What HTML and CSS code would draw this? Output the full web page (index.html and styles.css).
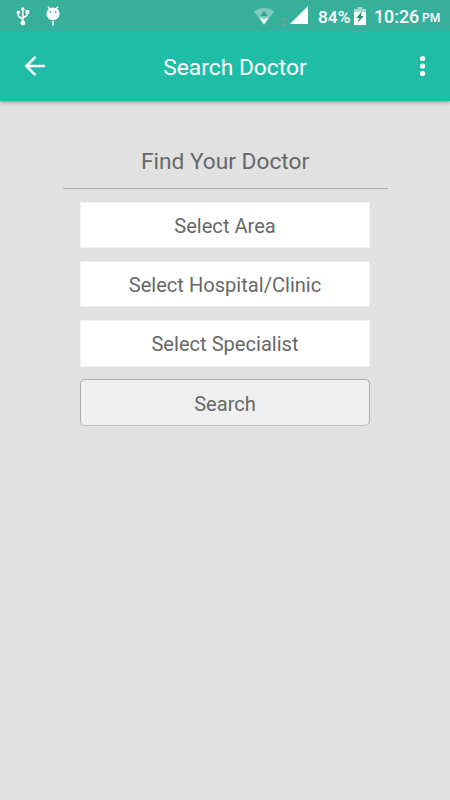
FILE: index.html
```html
<!DOCTYPE html>
<html lang="en">
<head>
<meta charset="utf-8">
<title>Search Doctor</title>
<link rel="stylesheet" href="styles.css">
</head>
<body>
<div class="status">
  <svg class="usb" width="14" height="20" viewBox="0 0 14 20" fill="none" stroke="#fff" stroke-width="1.6">
    <path d="M6.8 3v13M2.3 6v3.2Q2.3 10.5 3.8 11.2L6.8 13M11.2 5v3.2Q11.2 9.5 9.8 10.2L6.8 11.8"/>
    <path d="M6.8 .6 9 4H4.6zM9.6 4h3.6v3.4H9.6z" fill="#fff" stroke="none"/>
    <circle cx="2.3" cy="6.3" r="1.8" fill="#fff" stroke="none"/><circle cx="6.8" cy="17" r="2.4" fill="#fff" stroke="none"/>
  </svg>
  <svg class="droid" width="14" height="20" viewBox="0 0 14 20" fill="#fff">
    <path d="M2 .8 4 3M12 .8 10 3M7 15v4.5" fill="none" stroke="#fff" stroke-width="1.6"/>
    <ellipse cx="7" cy="7.8" rx="6.6" ry="6.4"/>
    <circle cx="4.3" cy="6" r=".9" fill="#36b09b"/><circle cx="9.7" cy="6" r=".9" fill="#36b09b"/>
  </svg>
  <svg class="wifi" width="22" height="18" viewBox="0 0 22 18">
    <path d="M.5 4.2Q11-2.2 21.5 4.2L11 18z" fill="#7ecbbd"/>
    <path d="M11 3.5 14.5 9h-7z" fill="#36a18f"/>
    <path d="M7 11h2l2 2 2-2h2.2L11 17.5z" fill="#fff"/>
  </svg>
  <span class="sim">2</span>
  <svg class="signal" width="18" height="18" viewBox="0 0 18 18"><path d="M0 18 18 0v18z" fill="#fff"/></svg>
  <span class="percent">84%</span>
  <svg class="battery" width="12" height="18" viewBox="0 0 12 18">
    <path d="M3.5 0h5v2H12v4H0V2h3.5z" fill="#a5dacf"/><path d="M0 5h12v13H0z" fill="#fff"/>
    <path d="m8.3 4-6 7h3l-1.7 5 6-7H6.8z" fill="#27947f"/>
  </svg>
  <span class="clock">10:26</span>
  <span class="period">PM</span>
</div>
<header class="bar">
  <svg class="back" width="22" height="22" viewBox="0 0 22 22" fill="none" stroke="#fff" stroke-width="2.5"><path d="M21 11H3M11.5 1.8 2.3 11l9.2 9.2"/></svg>
  <h1>Search Doctor</h1>
  <svg class="more" width="6" height="22" viewBox="0 0 6 22" fill="#fff"><circle cx="2.6" cy="3.5" r="2.6"/><circle cx="2.6" cy="11" r="2.6"/><circle cx="2.6" cy="18.5" r="2.6"/></svg>
</header>
<main>
  <h2>Find Your Doctor</h2>
  <div class="form">
    <button class="field">Select Area</button>
    <button class="field">Select Hospital/Clinic</button>
    <button class="field">Select Specialist</button>
    <button class="search">Search</button>
  </div>
</main>
</body>
</html>
```
FILE: styles.css
```css
* { box-sizing: border-box; }
body { margin: 0; height: 800px; background: #e1e1e1; font-family: Roboto, sans-serif; color: #686868; overflow: hidden; }
h1, h2 { margin: 0; font-weight: 400; }
.status { position: relative; z-index: 1; height: 31px; background: #36b09b; display: flex; align-items: flex-start; color: #fff; }
.status svg, .status span { flex: none; }
.usb { margin: 6px 0 0 16px; }
.droid { margin: 6px 0 0 15.5px; }
.wifi { margin: 7px 0 0 193.5px; }
.status .sim { width: 10px; margin: 17px 0 0 5px; padding-left: 1px; font-size: 9px; line-height: 10px; color: #879f99; }
.signal { margin: 6px 0 0 0; }
.percent { width: 33px; margin: 6px 0 0 10px; font-size: 17.3px; line-height: 22px; font-weight: 500; white-space: nowrap; }
.battery { margin: 7px 0 0 3px; }
.clock { width: 45px; margin: 6px 0 0 8px; font-size: 17.8px; line-height: 22px; font-weight: 500; white-space: nowrap; }
.period { margin: 11px 0 0 3px; font-size: 12px; line-height: 14px; font-weight: 500; }
.bar { height: 70px; background: #1fbda5; color: #fff; display: flex; align-items: center; justify-content: space-between; padding: 0 24px 0 24px; box-shadow: 0 1px 4px rgba(0,0,0,.42); }
.bar h1 { font-size: 22.8px; line-height: 30px; margin: 3px 0 0 4px; }
main { display: flex; flex-direction: column; align-items: center; padding-top: 44px; }
h2 { width: 325px; height: 44px; border-bottom: 1px solid #a9acaa; font-size: 22.7px; line-height: 33px; text-align: center; }
.form { width: 290px; margin-top: 12.5px; display: flex; flex-direction: column; gap: 13px; }
button { height: 46.4px; padding: 2px 0 0; border: 0; font: 20.1px/24px Roboto, sans-serif; color: #686868; text-align: center; }
.field { background: #fff; border: 1px solid #f0f0f0; }
.search { height: 47.4px; margin-top: -.7px; padding-top: 2px; background: #efefef; border: 1px solid #acacac; border-bottom-color: #bdbdbd; border-radius: 5px; }
```
